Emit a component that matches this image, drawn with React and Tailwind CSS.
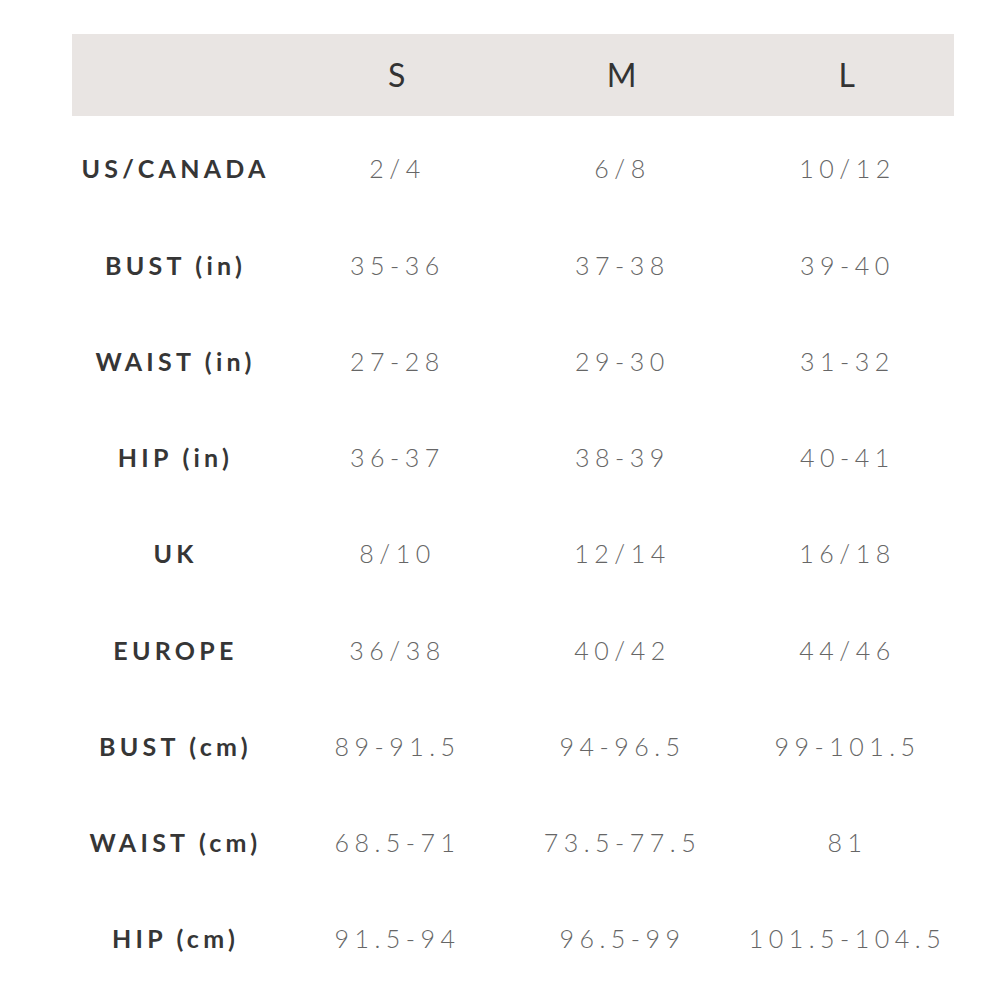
const sizes = ['S', 'M', 'L']

const rows = [
  { label: 'US/CANADA', values: ['2/4', '6/8', '10/12'] },
  { label: 'BUST (in)', values: ['35-36', '37-38', '39-40'] },
  { label: 'WAIST (in)', values: ['27-28', '29-30', '31-32'] },
  { label: 'HIP (in)', values: ['36-37', '38-39', '40-41'] },
  { label: 'UK', values: ['8/10', '12/14', '16/18'] },
  { label: 'EUROPE', values: ['36/38', '40/42', '44/46'] },
  { label: 'BUST (cm)', values: ['89-91.5', '94-96.5', '99-101.5'] },
  { label: 'WAIST (cm)', values: ['68.5-71', '73.5-77.5', '81'] },
  { label: 'HIP (cm)', values: ['91.5-94', '96.5-99', '101.5-104.5'] },
]

export default function App() {
  return (
    <div className="min-h-screen bg-white pt-[34px] pl-[72px] font-['Lato','Liberation_Sans',sans-serif]">
      <div className="w-[882px]">
        <div className="h-[82px] bg-[#e9e5e3]">
          <div className="grid grid-cols-[213px_225px_225px_225px] h-full items-center">
            <div />
            {sizes.map((s) => (
              <div key={s} className="text-center text-[32px] text-[#333] font-normal tracking-[0.05em]">{s}</div>
            ))}
          </div>
        </div>
        <div className="pt-[5px]">
          {rows.map((row) => (
            <div key={row.label} className="grid grid-cols-[213px_225px_225px_225px] h-[96.25px] items-center">
              <div className="text-center pr-[6px] text-[25px] font-bold text-[#363636] tracking-[0.17em]">{row.label}</div>
              {row.values.map((v, i) => (
                <div key={i} className="text-center text-[25px] font-light text-[#666] tracking-[0.22em]">{v}</div>
              ))}
            </div>
          ))}
        </div>
      </div>
    </div>
  )
}
